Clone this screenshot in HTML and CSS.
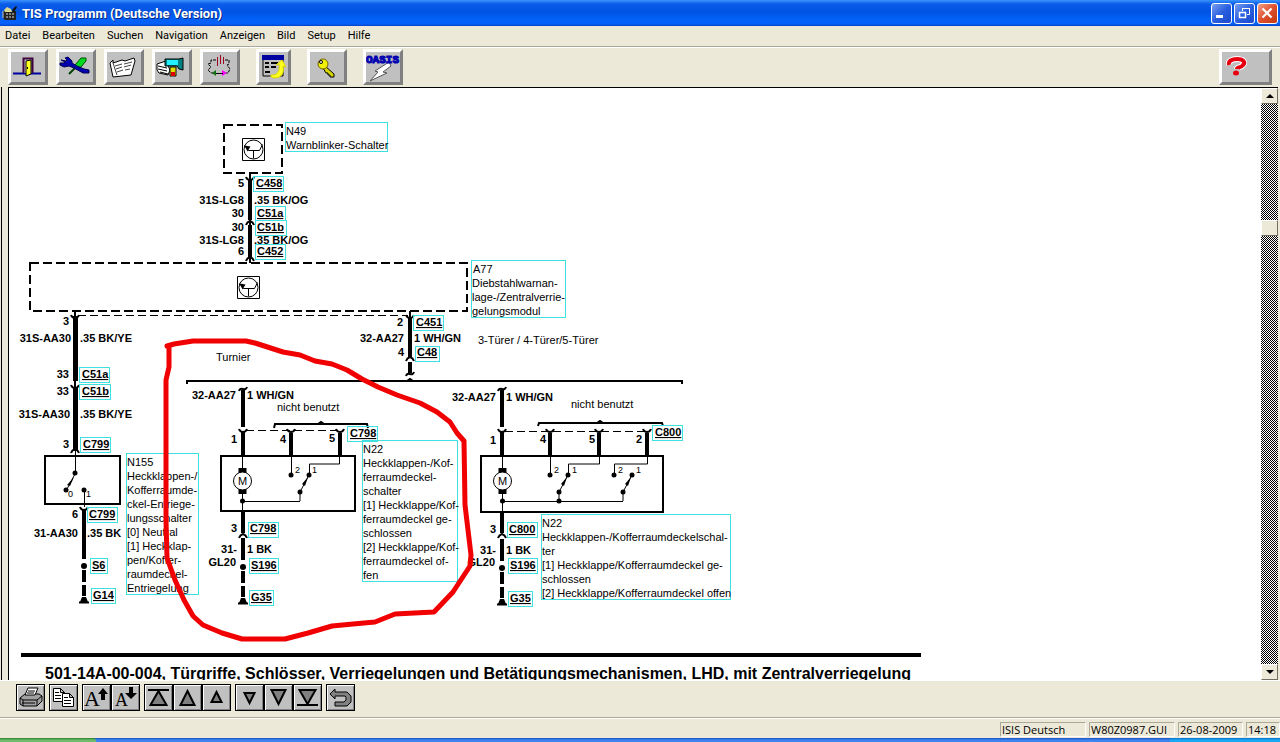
FILE: index.html
```html
<!DOCTYPE html>
<html lang="de">
<head>
  <meta charset="UTF-8">
  <meta name="viewport" content="width=device-width, initial-scale=1.0">
  <title>TIS Programm (Deutsche Version)</title>
  <link rel="stylesheet" href="styles.css">
</head>
<body>
  <!-- Title bar -->
  <header class="titlebar">
    <svg class="app-icon" width="16" height="16" viewBox="0 0 16 16" aria-hidden="true">
      <path d="M1 6h13v9H3l-2-2z" fill="#222"/>
      <path d="M2 5l3-3 4 2 1 3H3z" fill="#d8d890"/>
      <path d="M10 5l4-4 1 1-3 5z" fill="#111"/>
      <path d="M4 9h9M4 12h9" stroke="#ddd" stroke-dasharray="2 1"/>
      <path d="M1 6v7" stroke="#c8c8c8"/>
    </svg>
    <h1>TIS Programm (Deutsche Version)</h1>
    <div class="window-buttons">
      <button aria-label="Minimieren"><svg width="18" height="18"><path d="M4 12.500h7" stroke="#fff" stroke-width="3"/></svg></button>
      <button aria-label="Wiederherstellen"><svg width="18" height="18" fill="none" stroke="#fff"><path d="M7.500 7V4.500h7v6H12M7 4.500h8"/><path d="M4.500 8.500h6v5h-6zM4 8.500h7" stroke-width="1.500"/></svg></button>
      <button class="close" aria-label="Schließen"><svg width="18" height="18"><path d="M4.500 4.500l9 9M13.500 4.500l-9 9" stroke="#fff" stroke-width="2.200"/></svg></button>
    </div>
  </header>

  <nav class="menubar">
    <button>Datei</button>
    <button>Bearbeiten</button>
    <button>Suchen</button>
    <button>Navigation</button>
    <button>Anzeigen</button>
    <button>Bild</button>
    <button>Setup</button>
    <button>Hilfe</button>
  </nav>

  <!-- Main toolbar -->
  <div class="toolbar">
    <div class="tool-group">
      <button class="tool" aria-label="Beenden">
        <svg width="32" height="30" viewBox="0 0 32 30">
          <path d="M2 21.500h28" stroke="#0000a0" stroke-width="2"/>
          <path d="M12.500 21V6.500h9V21" fill="#c0c0c0" stroke="#400040" stroke-width="2"/>
          <path d="M15 9l5-1v14l-5 2z" fill="#ffff20" stroke="#000"/>
          <path d="M16.500 15v2" stroke="#000"/>
        </svg>
      </button>
      <button class="tool" aria-label="Werkzeuge">
        <svg width="32" height="30" viewBox="0 0 32 30">
          <path d="M10 22L23 9" stroke="#004000" stroke-width="2"/>
          <path d="M16 13l6-7h5v3l-5 6-4 1z" fill="#00d820" stroke="#005000"/>
          <path d="M2 8l4 2 2-2-2-2 3-1 4 4v2l5 3 7 3 5 1v3h-6l-9-5-5-2-5 1-4-2v-2h4l2-2z" fill="#0000b0" stroke="#000050"/>
        </svg>
      </button>
      <button class="tool" aria-label="Dokument">
        <svg width="32" height="30" viewBox="0 0 32 30">
          <path d="M3 11l3-3v3l9-3 3 1 9-3 1 3-4 14-9 1-9 1z" fill="#fff" stroke="#000"/>
          <path d="M8 14l7-2M17 12l8-2M9 17l6-2M17 15l7-2M10 20l6-2M18 18l5-1M6 11l4 12" stroke="#444"/>
        </svg>
      </button>
      <button class="tool" aria-label="Suche">
        <svg width="32" height="30" viewBox="0 0 32 30">
          <path d="M2 12l9-3 4 9-2 5-9-2-2-3z" fill="#fff" stroke="#000"/>
          <path d="M3 14l9 2M3 17l9 2M5 20l8 2" stroke="#000"/>
          <path d="M10 7h14l4-1v12l-4-1-2-3H10z" fill="#008080" stroke="#000"/>
          <path d="M12 8h11v5H12z" fill="#20f0ff"/>
          <path d="M15 15h6v9h-6z" fill="#e0e000" stroke="#000"/>
          <path d="M16 20h4v4h-4z" fill="#e00000"/>
        </svg>
      </button>
      <button class="tool" aria-label="Stromlaufplan">
        <svg width="32" height="30" viewBox="0 0 32 30" fill="none">
          <path d="M13 8H8v3l-3 1 3 3-3 3 3 3h3M22 8h4v4l-2 1 3 4-2 4h-2" stroke="#000" stroke-dasharray="3 1"/>
          <path d="M14.500 5v9M17.500 3v9M20.500 5v7" stroke="#a00020"/>
          <path d="M19 18l5 3-5 3z" fill="#ff00ff"/>
          <path d="M13 18l-4 3 4 3z" fill="#107010"/>
          <path d="M13 21.500h7" stroke="#000"/>
        </svg>
      </button>
    </div>
    <button class="tool tool-list" aria-label="Liste">
      <svg width="29" height="30" viewBox="0 0 29 30">
        <path d="M4 4h20v20H4z" fill="#c0c0c0" stroke="#000"/>
        <path d="M3 3h22v5H3z" fill="#0000a0"/>
        <path d="M6 11h4M6 15h4M6 20h5M12 11h7M12 15h5" stroke="#000" stroke-width="2"/>
        <path d="M12 23c7 1 9-5 8-11l-3 1 6-5 4 7-3-1c2 9-4 14-12 11z" fill="#ffff20" stroke="#d8d800"/>
      </svg>
    </button>
    <button class="tool" aria-label="Anmelden">
      <svg width="32" height="30" viewBox="0 0 32 30">
        <path d="M15 14l9 8v3h-4v-2h-2v-2h-2l-3-5z" fill="#d8d800" stroke="#000"/>
        <circle cx="13" cy="12" r="5" fill="#f0f000" stroke="#706000"/>
        <circle cx="11" cy="10" r="1.500" fill="#fff" stroke="#000"/>
      </svg>
    </button>
    <button class="tool oasis" aria-label="OASIS">
      <svg width="34" height="30" viewBox="0 0 34 30">
        <path d="M23 10l2 4-8 6 4 1L4 29l8-9-3-1z" fill="#fff" stroke="#555"/>
        <text x="0" y="11">OASIS</text>
      </svg>
    </button>
    <button class="tool tool-help" aria-label="Hilfe">
      <svg width="26" height="28" viewBox="0 0 26 28">
        <path d="M5 12c-1-4 3-6 8-6 6 0 9 3 6 6-2 3-6 2-6 4" fill="none" stroke="#fff" stroke-width="6"/>
        <path d="M5 12c-1-4 3-6 8-6 6 0 9 3 6 6-2 3-6 2-6 4" fill="none" stroke="#e80010" stroke-width="4"/>
        <ellipse cx="12" cy="20" rx="3" ry="2.500" fill="#e80010"/>
      </svg>
    </button>
  </div>

  <!-- Document window -->
  <main class="workspace">
    <div class="document">
      <svg class="diagram" width="912" height="565" viewBox="9 88 912 565">
        <defs>
          <g id="module">
            <path d="M-11 -11h22v22h-22z" class="thin"/>
            <circle r="9.500" class="thin"/>
            <path d="M-9 -4l4 5h11l3 -6M0 1v8" class="thin"/>
            <path d="M-9 -4l6 1-3 5z"/>
          </g>
          <path id="plug-down" d="M-4 -2q1 3 4 3q3 0 4 -3" class="plug"/>
          <path id="plug-up" d="M-4 2q1 -3 4 -4q3 1 4 4" class="plug"/>
          <g id="ground">
            <path d="M0 -37v22M0 -4v12M0 11v11" class="wire"/>
            <circle r="3" cy="-8"/>
            <path d="M-5 28.500h10" class="line"/>
            <path d="M-4 28l2-5h4l2 5z"/>
          </g>
          <g id="motor">
            <path d="M0 0v55" class="thin"/>
            <path d="M-4 12h8v5h-8zM-4 33h8v5h-8z"/>
            <circle cy="25" r="9" class="thin paper"/>
            <circle cy="45" r="2.500"/>
            <text x="0" y="29" text-anchor="middle">M</text>
          </g>
          <g id="contact">
            <path d="M0 0l-9 17v9" class="thin"/>
            <path d="M-1 2l-6 7 3 2z"/>
            <circle r="2.500"/>
            <circle cx="-9" cy="17" r="2.500"/>
          </g>
          <path id="break" d="M-4 2q1 -3 4 -2q3 1 4 -2" class="plug"/>
        </defs>

        <!-- Modules -->
        <path class="dashed" d="M224 125h58v48h-58z"/>
        <use href="#module" x="253.500" y="149.500"/>
        <path class="dashed" d="M30 263h437v48h-437z"/>
        <use href="#module" x="248.500" y="287.500"/>
        <path class="dashed-thin" d="M78 315.500h330"/>

        <!-- N49 to A77 -->
        <path class="line" d="M250 173v90"/>
        <path class="wire" d="M250 179v41M250 225v33"/>
        <use href="#plug-down" x="250" y="179"/>
        <use href="#plug-up" x="250" y="223"/>
        <use href="#plug-up" x="250" y="259"/>
        <g class="bold end">
          <text x="244" y="187">5</text>
          <text x="244" y="204">31S-LG8</text>
          <text x="244" y="217">30</text>
          <text x="244" y="231">30</text>
          <text x="244" y="244">31S-LG8</text>
          <text x="244" y="255">6</text>
        </g>
        <g class="bold">
          <text x="254" y="204">.35 BK/OG</text>
          <text x="254" y="244">.35 BK/OG</text>
        </g>

        <!-- Left branch, N155 -->
        <path class="line" d="M75 311v76"/>
        <path class="wire wide" d="M75.500 316v65M75.500 387v64"/>
        <path class="thin" d="M75.500 451v22l-9 17M84.500 489v18"/>
        <path d="M74 477l-7 8 3 1z"/>
        <circle cx="75" cy="473" r="2.500"/>
        <circle cx="66" cy="490" r="2.500"/>
        <circle cx="84" cy="490" r="2.500"/>
        <use href="#plug-down" x="75" y="317"/>
        <use href="#plug-down" x="75" y="387"/>
        <use href="#plug-up" x="75" y="451"/>
        <use href="#plug-down" x="84" y="509"/>
        <path class="box" d="M45 456h75v48h-75z"/>
        <path class="wire" d="M84 510v30"/>
        <use href="#ground" x="84" y="574"/>
        <g class="bold end">
          <text x="69" y="325">3</text>
          <text x="71" y="342">31S-AA30</text>
          <text x="69" y="378">33</text>
          <text x="69" y="395">33</text>
          <text x="70" y="418">31S-AA30</text>
          <text x="69" y="448">3</text>
          <text x="78" y="518">6</text>
          <text x="78" y="537">31-AA30</text>
        </g>
        <g class="bold">
          <text x="80" y="342">.35 BK/YE</text>
          <text x="80" y="418">.35 BK/YE</text>
          <text x="87" y="537">.35 BK</text>
        </g>
        <text class="small" x="68" y="497">0</text>
        <text class="small" x="86" y="497">1</text>

        <!-- C451 / C48 -->
        <path class="line" d="M410 311v8"/>
        <path class="wire" d="M410 317v40M410 362v11"/>
        <use href="#plug-down" x="410" y="317"/>
        <use href="#plug-up" x="410" y="359"/>
        <use href="#break" x="410" y="374"/>
        <path class="line" d="M187 384v-3h495v3M407 381l3-2 3 2"/>
        <g class="bold end">
          <text x="403" y="326">2</text>
          <text x="404" y="342">32-AA27</text>
          <text x="404" y="356">4</text>
        </g>
        <text class="bold" x="414" y="342">1 WH/GN</text>
        <text x="478" y="344">3-Türer / 4-Türer/5-Türer</text>
        <text x="216" y="361">Turnier</text>

        <!-- N22, Turnier -->
        <use href="#break" x="243" y="389"/>
        <path class="wire" d="M243 390v37M243 432v24M291 433v23M340 433v23"/>
        <path class="dashed-thin" d="M246 430.500h94"/>
        <use href="#plug-down" x="243" y="431"/>
        <use href="#plug-down" x="291" y="431"/>
        <use href="#plug-down" x="340" y="431"/>
        <path class="line" d="M274 428l1-4h92l1 4M318 424l3-2 3 2"/>
        <path class="box" d="M221 456h134v55h-134z"/>
        <use href="#motor" x="242.500" y="456"/>
        <path class="thin" d="M291.500 456v19M339.500 456v8h-30v11M242 501.500h58"/>
        <circle cx="291" cy="475" r="2.500"/>
        <use href="#contact" x="309" y="475"/>
        <path class="wire" d="M243 511v22"/>
        <use href="#plug-up" x="243" y="536"/>
        <use href="#ground" x="243" y="575"/>
        <g class="bold end">
          <text x="236" y="399">32-AA27</text>
          <text x="237" y="443">1</text>
          <text x="286" y="443">4</text>
          <text x="335" y="442">5</text>
          <text x="237" y="532">3</text>
          <text x="237" y="553">31-</text>
          <text x="236" y="566">GL20</text>
        </g>
        <g class="bold">
          <text x="247" y="399">1 WH/GN</text>
          <text x="247" y="553">1 BK</text>
        </g>
        <text x="277" y="411">nicht benutzt</text>
        <text class="small" x="295" y="473">2</text>
        <text class="small" x="312" y="473">1</text>

        <!-- N22, 3-/4-/5-Türer -->
        <use href="#break" x="502" y="389"/>
        <path class="wire" d="M502 390v37M502 432v24M550 433v23M599 433v23M647 433v23"/>
        <path class="dashed-thin" d="M505 431.500h142"/>
        <use href="#plug-down" x="502" y="431"/>
        <use href="#plug-down" x="550" y="431"/>
        <use href="#plug-down" x="599" y="431"/>
        <use href="#plug-down" x="647" y="431"/>
        <path class="line" d="M538 426l1-3h123l1 3M597 423l3-2 3 2"/>
        <path class="box" d="M481 456h182v56h-182z"/>
        <use href="#motor" x="502.500" y="456"/>
        <path class="thin" d="M550.500 456v19M599.500 456v8h-31v11M647.500 456v8h-33v11M502 501.500h121"/>
        <circle cx="550" cy="475" r="2.500"/>
        <circle cx="614" cy="475" r="2.500"/>
        <circle cx="559" cy="501" r="2.500"/>
        <use href="#contact" x="568" y="475"/>
        <use href="#contact" x="632" y="475"/>
        <path class="wire" d="M502 512v21"/>
        <use href="#plug-up" x="502" y="536"/>
        <use href="#ground" x="502" y="576"/>
        <g class="bold end">
          <text x="496" y="401">32-AA27</text>
          <text x="496" y="444">1</text>
          <text x="546" y="443">4</text>
          <text x="595" y="443">5</text>
          <text x="642" y="443">2</text>
          <text x="496" y="533">3</text>
          <text x="496" y="554">31-</text>
          <text x="495" y="566">GL20</text>
        </g>
        <g class="bold">
          <text x="506" y="401">1 WH/GN</text>
          <text x="506" y="554">1 BK</text>
        </g>
        <text x="571" y="408">nicht benutzt</text>
        <text class="small" x="554" y="473">2</text>
        <text class="small" x="572" y="473">1</text>
        <text class="small" x="618" y="473">2</text>
        <text class="small" x="636" y="473">1</text>

        <!-- Connector links -->
        <g class="links">
          <a href="#C458"><rect x="253" y="176" width="30" height="15"/><text x="256" y="187">C458</text></a>
          <a href="#C51a"><rect x="255" y="206" width="30" height="14"/><text x="257" y="217">C51a</text></a>
          <a href="#C51b"><rect x="255" y="220" width="31" height="15"/><text x="257" y="231">C51b</text></a>
          <a href="#C452"><rect x="255" y="244" width="30" height="15"/><text x="257" y="255">C452</text></a>
          <a href="#C51a"><rect x="79" y="367" width="30" height="15"/><text x="82" y="378">C51a</text></a>
          <a href="#C51b"><rect x="79" y="384" width="31" height="15"/><text x="82" y="395">C51b</text></a>
          <a href="#C799"><rect x="80" y="437" width="30" height="15"/><text x="83" y="448">C799</text></a>
          <a href="#C799"><rect x="87" y="507" width="30" height="15"/><text x="89" y="518">C799</text></a>
          <a href="#S6"><rect x="90" y="558" width="17" height="15"/><text x="92" y="569">S6</text></a>
          <a href="#G14"><rect x="91" y="588" width="24" height="15"/><text x="93" y="599">G14</text></a>
          <a href="#C451"><rect x="413" y="315" width="30" height="15"/><text x="416" y="326">C451</text></a>
          <a href="#C48"><rect x="415" y="346" width="24" height="15"/><text x="417" y="356">C48</text></a>
          <a href="#C798"><rect x="347" y="426" width="30" height="15"/><text x="350" y="437">C798</text></a>
          <a href="#C798"><rect x="248" y="522" width="30" height="15"/><text x="250" y="532">C798</text></a>
          <a href="#S196"><rect x="249" y="558" width="29" height="15"/><text x="251" y="569">S196</text></a>
          <a href="#G35"><rect x="249" y="590" width="24" height="15"/><text x="251" y="601">G35</text></a>
          <a href="#C800"><rect x="652" y="425" width="30" height="15"/><text x="655" y="436">C800</text></a>
          <a href="#C800"><rect x="507" y="522" width="30" height="15"/><text x="509" y="533">C800</text></a>
          <a href="#S196"><rect x="508" y="558" width="29" height="15"/><text x="510" y="569">S196</text></a>
          <a href="#G35"><rect x="508" y="591" width="24" height="15"/><text x="510" y="602">G35</text></a>
        </g>

        <!-- Component notes -->
        <g class="notes">
          <rect x="285" y="122" width="102" height="29"/>
          <text x="286" y="135">N49<tspan x="286" dy="14">Warnblinker-Schalter</tspan></text>
          <rect x="471" y="260" width="94" height="57"/>
          <text x="473" y="273">A77<tspan x="472" dy="14">Diebstahlwarnan-</tspan><tspan x="472" dy="14">lage-/Zentralverrie-</tspan><tspan x="472" dy="14">gelungsmodul</tspan></text>
          <rect x="126" y="453" width="72" height="141"/>
          <text x="127" y="466">N155<tspan x="127" dy="14">Heckklappen-/</tspan><tspan x="127" dy="14">Kofferraumde-</tspan><tspan x="127" dy="14">ckel-Entriege-</tspan><tspan x="127" dy="14">lungsschalter</tspan><tspan x="127" dy="14">[0] Neutral</tspan><tspan x="127" dy="14">[1] Heckklap-</tspan><tspan x="127" dy="14">pen/Koffer-</tspan><tspan x="127" dy="14">raumdeckel-</tspan><tspan x="127" dy="14">Entriegelung</tspan></text>
          <rect x="362" y="440" width="95" height="141"/>
          <text x="363" y="453">N22<tspan x="363" dy="14">Heckklappen-/Kof-</tspan><tspan x="363" dy="14">ferraumdeckel-</tspan><tspan x="363" dy="14">schalter</tspan><tspan x="363" dy="14">[1] Heckklappe/Kof-</tspan><tspan x="363" dy="14">ferraumdeckel ge-</tspan><tspan x="363" dy="14">schlossen</tspan><tspan x="363" dy="14">[2] Heckklappe/Kof-</tspan><tspan x="363" dy="14">ferraumdeckel of-</tspan><tspan x="363" dy="14">fen</tspan></text>
          <rect x="541" y="514" width="189" height="85"/>
          <text x="542" y="527">N22<tspan x="542" dy="14">Heckklappen-/Kofferraumdeckelschal-</tspan><tspan x="542" dy="14">ter</tspan><tspan x="542" dy="14">[1] Heckklappe/Kofferraumdeckel ge-</tspan><tspan x="542" dy="14">schlossen</tspan><tspan x="542" dy="14">[2] Heckklappe/Kofferraumdeckel offen</tspan></text>
        </g>

        <!-- Hand-drawn marking -->
        <path class="marker" d="M167 346L174 344L193 341H246L255 343L283 352L300 355L315 361L332 364L347 370L362 379L378 387L397 395L420 403L437 412L450 422L457 433L464 441L465 505L468 530L471 555L470 566L453 592L434 612L395 614L375 622L353 624L332 626L308 633L285 639H242L222 633L203 625L193 616L184 600L175 580L167 558L166 520V380L169 367V346"/>
      </svg>
      <hr class="rule">
      <h2>501-14A-00-004, Türgriffe, Schlösser, Verriegelungen und Betätigungsmechanismen, LHD, mit Zentralverriegelung</h2>
    </div>
    <div class="scrollbar">
      <button aria-label="Nach oben"><svg width="8" height="4"><path d="M0 4l4-4 4 4z"/></svg></button>
      <div class="track"><div class="thumb"></div></div>
      <button aria-label="Nach unten"><svg width="8" height="4"><path d="M0 0h8l-4 4z"/></svg></button>
    </div>
  </main>

  <!-- Page toolbar -->
  <div class="pagebar">
    <div class="page-group">
      <button aria-label="Drucken">
        <svg width="25" height="23" viewBox="0 0 25 23" stroke="#000">
          <path d="M2 12l5-4h14l3 2v5l-5 5H5l-3-2z" fill="#a0a0a0"/>
          <path d="M7 9l3-7h10l-3 7z" fill="#fff"/>
          <path d="M2 12l3 2h14l5-4M5 14v6M19 14v6M10 5h7M9 7h7M4 17h13" fill="none"/>
        </svg>
      </button>
    </div>
    <div class="page-group">
      <button aria-label="Kopieren">
        <svg width="25" height="23" viewBox="0 0 25 23" stroke="#000" fill="#fff">
          <path d="M2.500 2.500h7l4 4v9h-11zM9.500 2.500v4h4"/>
          <path d="M11.500 7.500h7l4 4v9h-11zM18.500 7.500v4h4"/>
          <path d="M4 6.500h4M4 9.500h6M4 12.500h6M13 11.500h4M13 14.500h7M13 17.500h7"/>
        </svg>
      </button>
    </div>
    <div class="page-group">
      <button aria-label="Schrift größer"><svg class="glyph" width="25" height="23" viewBox="0 0 25 23"><text x="0" y="20">A</text><path d="M19 2l5 6h-3v6h-4V8h-3z"/></svg></button>
      <button aria-label="Schrift kleiner"><svg class="glyph small-a" width="25" height="23" viewBox="0 0 25 23"><text x="2" y="20">A</text><path d="M18 13l6-6h-4V1h-4v6h-4z"/></svg></button>
    </div>
    <div class="page-group arrows">
      <button aria-label="Anfang"><svg width="25" height="23"><path d="M2 4h21M12.500 5l8 14h-16z"/></svg></button>
      <button aria-label="Seite zurück"><svg width="25" height="23"><path d="M12.500 5l7 14h-14z"/></svg></button>
      <button aria-label="Zurück"><svg width="25" height="23"><path d="M12.500 6l5 10h-10z"/></svg></button>
    </div>
    <div class="page-group arrows">
      <button aria-label="Weiter"><svg width="25" height="23"><path d="M12.500 17l5-10h-10z"/></svg></button>
      <button aria-label="Seite vor"><svg width="25" height="23"><path d="M12.500 18l7-14h-14z"/></svg></button>
      <button aria-label="Ende"><svg width="25" height="23"><path d="M2 19h21M12.500 18l8-14h-16z"/></svg></button>
    </div>
    <div class="page-group">
      <button aria-label="Rückgängig"><svg width="25" height="23"><path d="M2 8l5-5v3h12l4 4v6l-4 4H7v-4h9l2-2v-3l-1-1H7v3z" fill="#808080" stroke="#000"/></svg></button>
    </div>
  </div>

  <footer class="statusbar">
    <span class="pane">ISIS Deutsch</span>
    <span class="pane">W80Z0987.GUI</span>
    <span class="pane pane-date">26-08-2009</span>
    <span class="pane pane-time">14:18</span>
  </footer>
  <div class="taskbar"><div class="start"></div><div class="tray"></div></div>
</body>
</html>
```
FILE: styles.css
```css
* {
  box-sizing: border-box;
}
body {
  margin: 0;
  height: 100vh;
  display: flex;
  flex-direction: column;
  overflow: hidden;
  background-color: #ece9d8;
  color: #000;
  font-family: "Open Sans", sans-serif;
  font-size: 11px;
}
button {
  padding: 0;
  margin: 0;
  border: none;
  background: none;
  font: inherit;
  color: inherit;
}
svg {
  display: block;
}

/* Title bar */
.titlebar {
  flex: none;
  height: 26px;
  display: flex;
  align-items: center;
  gap: 4px;
  padding: 0 2px;
  background: linear-gradient(#3c94ff 0, #0a5ce8 4px, #0054e3 12px, #0362fb 20px, #0460f8 24px, #0040c0 26px);
}
.titlebar h1 {
  flex: 1;
  margin: 0;
  color: #fff;
  font-family: Roboto, sans-serif;
  font-size: 13px;
  font-weight: bold;
  text-shadow: 1px 1px #0a2a80;
}
.window-buttons {
  display: flex;
  gap: 2px;
}
.window-buttons button {
  width: 21px;
  height: 21px;
  border: 1px solid #fff;
  border-radius: 3px;
  background: linear-gradient(135deg, #7a9ff0, #2a5fe0 50%, #1c48c8);
}
.window-buttons .close {
  background: linear-gradient(135deg, #f0a088, #e0502c 50%, #c03810);
}

/* Menu */
.menubar {
  flex: none;
  height: 21px;
  display: flex;
  align-items: center;
  gap: 12px;
  padding: 0 5px 2px;
  border-bottom: 1px solid #aca899;
  font-family: Roboto, sans-serif;
}

/* Toolbar */
.toolbar {
  flex: none;
  height: 40px;
  display: flex;
  align-items: flex-start;
  gap: 16px;
  padding: 1px 8px 0;
  border-top: 1px solid #fff;
}
.tool-group {
  display: flex;
  gap: 8px;
}
.tool {
  width: 40px;
  height: 36px;
  border: 3px solid;
  border-color: #fff #808080 #808080 #fff;
  background-color: #c0c0c0;
}
.tool-list {
  width: 35px;
}
.tool-help {
  width: 53px;
  margin-left: auto;
}
.tool-help svg {
  margin-left: 2px;
}
.oasis text {
  font-family: "Liberation Mono", monospace;
  font-size: 11px;
  font-weight: bold;
  fill: #0000b0;
  stroke: #0000b0;
  stroke-width: 1;
}

/* Document */
.workspace {
  flex: 1;
  min-height: 0;
  display: flex;
  margin: 0 2px 0 1px;
  padding-left: 6px;
  border-left: 1px solid #000;
}
.document {
  flex: 1;
  min-width: 0;
  overflow: hidden;
  background-color: #fff;
  border-top: 1px solid #000;
  border-left: 1px solid #000;
}
.document h2 {
  margin: 7px 0 0 36px;
  font-family: "Liberation Sans", Arial, sans-serif;
  font-size: 16px;
  line-height: 20px;
  white-space: nowrap;
}
.rule {
  width: 900px;
  height: 4px;
  margin: 0 0 0 12px;
  border: none;
  background-color: #000;
}

/* Wiring diagram */
.diagram {
  font-family: "Liberation Sans", Arial, sans-serif;
  font-size: 11px;
}
.diagram .bold {
  font-weight: bold;
}
.diagram .end {
  text-anchor: end;
}
.diagram .small {
  font-size: 9px;
}
.thin {
  fill: none;
  stroke: #000;
  stroke-width: 1;
}
.paper {
  fill: #fff;
}
.line, .box {
  fill: none;
  stroke: #000;
  stroke-width: 2;
}
.wire {
  fill: none;
  stroke: #000;
  stroke-width: 4;
}
.wide {
  stroke-width: 5;
}
.plug {
  fill: none;
  stroke: #000;
  stroke-width: 2;
}
.dashed {
  fill: none;
  stroke: #000;
  stroke-width: 2;
  stroke-dasharray: 9 4;
}
.dashed-thin {
  fill: none;
  stroke: #000;
  stroke-dasharray: 8 4;
}
.links rect, .notes rect {
  fill: none;
  stroke: #40e0e0;
  shape-rendering: crispEdges;
}
.links text {
  fill: #000;
  font-weight: bold;
  text-decoration: underline;
}
.marker {
  fill: none;
  stroke: #f00000;
  stroke-width: 5;
  stroke-linejoin: round;
  stroke-linecap: round;
}

/* Scrollbar */
.scrollbar {
  flex: none;
  width: 17px;
  display: flex;
  flex-direction: column;
  border-top: 1px solid #000;
}
.scrollbar button, .thumb {
  flex: none;
  height: 16px;
  display: flex;
  align-items: center;
  justify-content: center;
  background-color: #ece9d8;
  border: 1px solid;
  border-color: #fff #716f64 #716f64 #fff;
}
.track {
  flex: 1;
  display: flex;
  flex-direction: column;
  background: repeating-conic-gradient(#000 0 25%, #fff 0 50%) 0 0 / 2px 2px;
}
.track::before {
  content: "";
  flex: 116;
}
.track::after {
  content: "";
  flex: 428;
}

/* Page toolbar */
.pagebar {
  flex: none;
  height: 38px;
  display: flex;
  gap: 4px;
  padding: 3px 16px 0;
  border-top: 1px solid #fff;
  border-bottom: 1px solid #aca899;
}
.page-group {
  display: flex;
}
.page-group button {
  width: 29px;
  height: 27px;
  border: 1px solid #000;
  background-color: #c0c0c0;
  box-shadow: inset 1px 1px #fff, inset -1px -1px #808080;
}
.page-group svg {
  margin: 0 1px;
}
.glyph {
  overflow: visible;
  font-family: "Liberation Serif", serif;
  font-size: 22px;
}
.small-a {
  font-size: 18px;
}
.arrows path {
  fill: #808080;
  stroke: #000;
  stroke-width: 2;
}

/* Status bar */
.statusbar {
  flex: none;
  height: 20px;
  display: flex;
  justify-content: flex-end;
  gap: 3px;
  padding-top: 3px;
  border-top: 1px solid #fff;
}
.pane {
  width: 86px;
  height: 15px;
  padding-left: 1px;
  line-height: 14px;
  white-space: nowrap;
  border: 1px solid;
  border-color: #aca899 #fff #fff #aca899;
}
.pane-date {
  width: 65px;
}
.pane-time {
  width: 34px;
}
.taskbar {
  flex: none;
  height: 4px;
  display: flex;
  justify-content: space-between;
  background: linear-gradient(#1c50c0, #3c84f0 2px);
}
.start {
  width: 96px;
  background: linear-gradient(#2c7c2c, #6cbc6c 2px);
  border-radius: 0 3px 0 0;
}
.tray {
  width: 110px;
  background: linear-gradient(#0c70d0, #18a8f4 2px);
}
```
